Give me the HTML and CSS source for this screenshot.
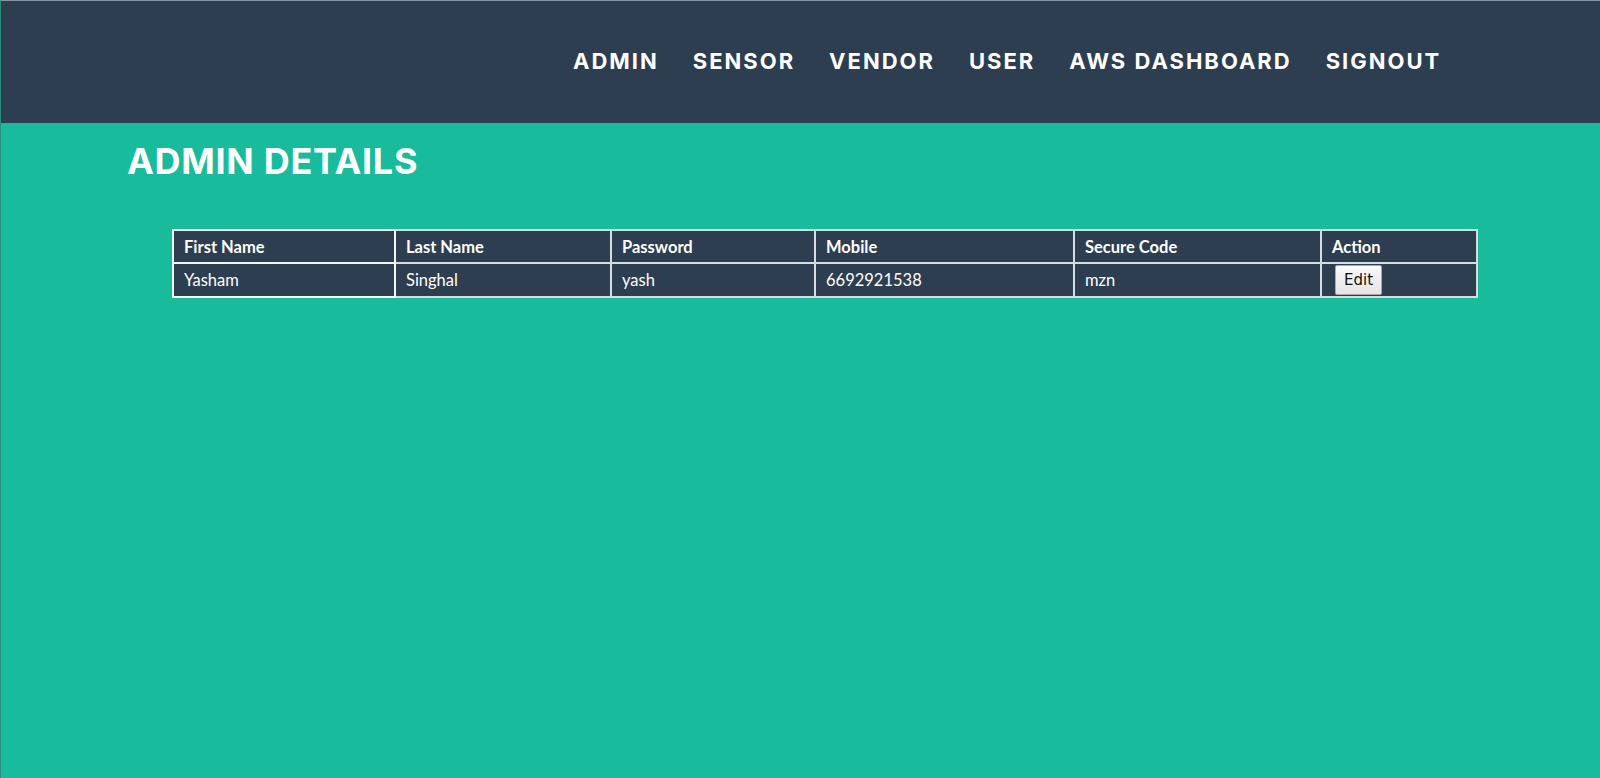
FILE: index.html
```html
<!DOCTYPE html>
<html>
<head>
<meta charset="utf-8">
<title>Admin Details</title>
<link rel="stylesheet" href="styles.css">
</head>
<body>
<header class="topbar">
  <nav class="nav">
    <a href="#">Admin</a>
    <a href="#">Sensor</a>
    <a href="#">Vendor</a>
    <a href="#">User</a>
    <a href="#">AWS Dashboard</a>
    <a href="#">Signout</a>
  </nav>
</header>
<main class="content">
  <h2 class="title">Admin Details</h2>
  <table class="grid">
    <colgroup>
      <col class="c1"><col class="c2"><col class="c3"><col class="c4"><col class="c5"><col class="c6">
    </colgroup>
    <thead>
      <tr>
        <th class="first">First Name</th>
        <th>Last Name</th>
        <th>Password</th>
        <th>Mobile</th>
        <th>Secure Code</th>
        <th>Action</th>
      </tr>
    </thead>
    <tbody>
      <tr>
        <td class="first">Yasham</td>
        <td>Singhal</td>
        <td>yash</td>
        <td>6692921538</td>
        <td>mzn</td>
        <td><button class="edit" type="button">Edit</button></td>
      </tr>
    </tbody>
  </table>
</main>
</body>
</html>
```
FILE: styles.css
```css
html, body {
  margin: 0;
  padding: 0;
  height: 100%;
}
body {
  background: #18bc9c;
  font-family: Lato, "Open Sans", sans-serif;
  border-top: 1px solid #8796a4;
  border-left: 1px solid #2a8f7c;
  box-sizing: border-box;
}
.topbar {
  background: #2c3e50;
  height: 122px;
  display: flex;
  align-items: center;
}
.nav {
  display: flex;
  gap: 34px;
  margin-left: 572px;
  margin-top: -2px;
}
.nav a {
  color: #ffffff;
  text-decoration: none;
  text-transform: uppercase;
  font-family: Inter, "DejaVu Sans", sans-serif;
  font-weight: 700;
  font-size: 22px;
  letter-spacing: 2px;
}
.content {
  padding: 17px 0 0 126px;
}
.title {
  margin: 0;
  color: #ffffff;
  text-transform: uppercase;
  font-family: Inter, "DejaVu Sans", sans-serif;
  font-weight: 700;
  font-size: 36px;
  letter-spacing: 0.7px;
  line-height: 42px;
}
.grid {
  margin: 47px 0 0 45px;
  border-collapse: collapse;
  table-layout: fixed;
  width: 1304px;
  background: #2c3e50;
  color: #ffffff;
  font-size: 16.5px;
}
.c1 { width: 222px; }
.c2 { width: 216px; }
.c3 { width: 204px; }
.c4 { width: 259px; }
.c5 { width: 247px; }
.c6 { width: 156px; }
.grid th, .grid td {
  border: 2px solid #d3dde3;
  height: 31px;
  padding: 0 10px;
  text-align: left;
  vertical-align: middle;
}
.grid td {
  height: 32px;
  font-weight: 400;
}
.grid th {
  font-weight: 700;
}
.grid .first {
  border-color: #f4f8fa;
}
.edit {
  font-family: "DejaVu Sans", sans-serif;
  font-size: 15px;
  color: #111;
  background: linear-gradient(#fafafa, #e4e4e4);
  border: 1px solid #a9a9a9;
  border-radius: 2px;
  width: 47px;
  height: 30px;
  padding: 0;
  margin-left: 3px;
  display: block;
}
```
